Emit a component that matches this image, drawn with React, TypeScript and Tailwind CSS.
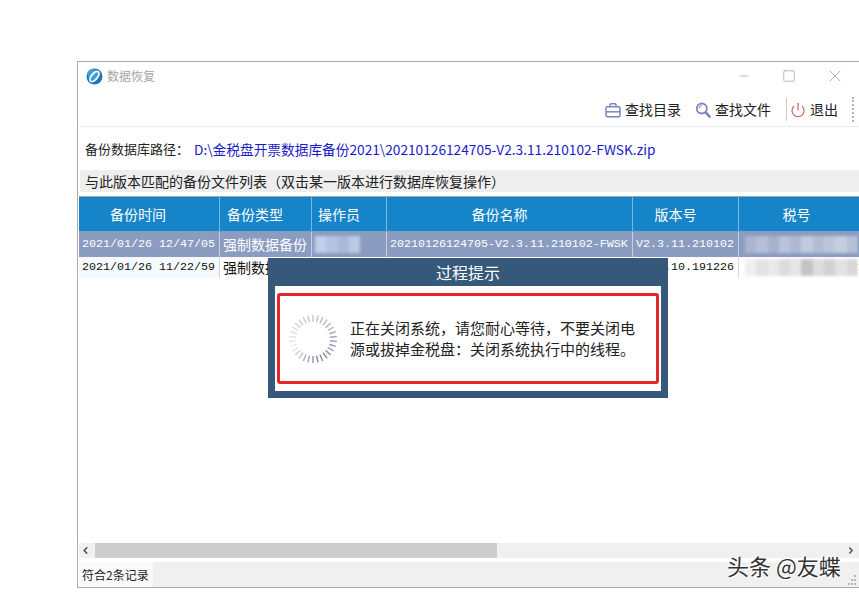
import { Minus, Square, X, ChevronLeft, ChevronRight, Power } from "lucide-react";

const FONT = "font-['Noto_Sans_CJK_SC','Liberation_Sans',sans-serif]";
const MONO = "font-['Liberation_Mono','Noto_Sans_CJK_SC',monospace] text-[11.67px]";

function Logo() {
  return (
    <svg width="17" height="17" viewBox="0 0 17 17">
      <circle cx="8.5" cy="8.5" r="8" fill="#1c78b8" />
      <circle cx="7" cy="6.5" r="5.5" fill="#4fb0de" opacity="0.7" />
      <ellipse cx="8.5" cy="8.5" rx="3" ry="6" transform="rotate(40 8.5 8.5)" fill="none" stroke="#ffffff" strokeWidth="1.8" />
    </svg>
  );
}

function BriefcaseIcon() {
  return (
    <svg width="16" height="16" viewBox="0 0 16 16" fill="none" stroke="#7b84bb" strokeWidth="1.5">
      <rect x="1" y="4.8" width="14" height="10" rx="1.5" />
      <path d="M1 9.8h14" />
      <path d="M5 4.8V2.8a1 1 0 0 1 1-1h4a1 1 0 0 1 1 1v2" />
    </svg>
  );
}

function SearchIcon() {
  return (
    <svg width="16" height="16" viewBox="0 0 16 16" fill="none" stroke="#7b84bb">
      <circle cx="6.8" cy="6.5" r="5" strokeWidth="1.8" />
      <path d="M4 6.5a2.8 2.8 0 0 1 2.8-2.8" strokeWidth="1" />
      <path d="M10.6 10.4L14.6 14.6" strokeWidth="2.6" strokeLinecap="round" />
    </svg>
  );
}

function Spinner() {
  const ticks = Array.from({ length: 30 }, (_, i) => i * 12);
  return (
    <svg width="52" height="52" viewBox="-26 -26 52 52">
      {ticks.map((a) => {
        const rel = (a - 250 + 360) % 360;
        const op = rel < 280 ? 0.12 + (rel / 280) * 0.68 : 0.8 - ((rel - 280) / 80) * 0.68;
        return (
          <line
            key={a}
            x1="0"
            y1="-17"
            x2="0"
            y2="-24"
            stroke="#5c6b85"
            strokeWidth="1.4"
            opacity={op}
            transform={`rotate(${a})`}
          />
        );
      })}
    </svg>
  );
}

function Tool({ icon, label }: { icon: React.ReactNode; label: string }) {
  return (
    <div className="flex items-center gap-[4px]">
      {icon}
      <span className="text-[14px] text-[#222]">{label}</span>
    </div>
  );
}

const cols = "grid grid-cols-[141px_92px_75px_246px_106px_119px_60px]";

function Mosaic({ tones }: { tones: string[] }) {
  return (
    <div className="flex h-[17px] w-full blur-[1.5px]">
      {tones.map((t, i) => (
        <div key={i} className={`flex-1 ${t}`} />
      ))}
    </div>
  );
}

const rowOneTax = [
  "bg-[#aab6cf]", "bg-[#b5c0d8]", "bg-[#a6b2cc]", "bg-[#b9c4da]", "bg-[#aeb9d2]",
  "bg-[#c2cbde]", "bg-[#b2bdd5]", "bg-[#bcc6db]", "bg-[#c6cfe0]", "bg-[#b5c0d6]",
];
const rowTwoTax = [
  "bg-[#efefef]", "bg-[#e3e3e3]", "bg-[#e9e9e9]", "bg-[#dcdcdc]", "bg-[#e6e6e6]",
  "bg-[#c4c4c4]", "bg-[#dddddd]", "bg-[#d2d2d2]", "bg-[#e2e2e2]", "bg-[#d8d8d8]",
];

export default function App() {
  return (
    <div className={`relative w-[859px] h-[595px] overflow-hidden bg-white pt-[61px] pl-[77px] ${FONT}`}>
      <div className="w-[800px] h-[527px] border border-[#ababab] flex flex-col bg-white">
        {/* title bar */}
        <div className="h-[30px] flex items-center pl-[8px] pb-[2px] shrink-0">
          <Logo />
          <span className="ml-[4px] text-[12px] text-[#a5a5a5]">数据恢复</span>
          <div className="ml-[582px] flex items-center text-[#8c8c8c]">
            <Minus size={14} strokeWidth={1} />
            <Square size={14} strokeWidth={1} className="ml-[31px]" />
            <X size={20} strokeWidth={0.8} className="ml-[29px]" />
          </div>
        </div>

        {/* toolbar */}
        <div className="h-[35px] pt-[1px] border-b border-[#ececec] flex items-center pl-[527px] shrink-0">
          <Tool icon={<BriefcaseIcon />} label="查找目录" />
          <div className="ml-[14px]">
            <Tool icon={<SearchIcon />} label="查找文件" />
          </div>
          <div className="ml-[15px] h-[23px] w-px bg-[#e3c4c4]" />
          <div className="ml-[3px]">
            <Tool icon={<Power size={16} color="#cf6060" strokeWidth={1.8} />} label="退出" />
          </div>
          <div className="ml-[14px] h-[25px] w-[2px] border-l-2 border-dotted border-[#b5b5b5]" />
        </div>

        {/* path */}
        <div className="h-[43px] flex items-center pl-[7px] pt-[1px] shrink-0">
          <span className="text-[#222] text-[13px] w-[109px]">备份数据库路径：</span>
          <span className="text-[#1a1ac8] text-[13.7px] whitespace-nowrap">D:\金税盘开票数据库备份2021\20210126124705-V2.3.11.210102-FWSK.zip</span>
        </div>

        {/* section */}
        <div className="h-[22px] ml-[2px] bg-[#eeeeee] flex items-center pl-[5px] text-[14px] text-[#222] shrink-0">
          与此版本匹配的备份文件列表（双击某一版本进行数据库恢复操作）
        </div>

        {/* table */}
        <div className="mt-[4px] ml-px flex-1 min-h-0 overflow-hidden">
          <div className={`${cols} h-[35px] bg-[#1684c8] border-t border-[#9aa9b5] text-white text-[14px]`}>
            <div className="flex items-center pl-[31px] border-r border-[#7fb8dd]">备份时间</div>
            <div className="flex items-center pl-[7px] border-r border-[#7fb8dd]">备份类型</div>
            <div className="flex items-center pl-[6px] border-r border-[#7fb8dd]">操作员</div>
            <div className="flex items-center justify-center pr-[20px] border-r border-[#7fb8dd]">备份名称</div>
            <div className="flex items-center justify-center pr-[20px] border-r border-[#7fb8dd]">版本号</div>
            <div className="flex items-center justify-center pr-[4px]">税号</div>
            <div />
          </div>
          <div className={`${cols} h-[26px] pt-[1px] bg-[#8a9cbf] text-white`}>
            <div className={`flex items-center pl-[3px] border-r border-[#c5cfe0] ${MONO}`}>2021/01/26 12/47/05</div>
            <div className="flex items-center pl-[3px] border-r border-[#c5cfe0] text-[14px]">强制数据备份</div>
            <div className="flex items-center pl-[3px] pr-[26px] border-r border-[#c5cfe0] overflow-hidden">
              <Mosaic tones={["bg-[#c2cfe8]", "bg-[#b4c3e0]", "bg-[#a9b9d8]", "bg-[#bccae4]"]} />
            </div>
            <div className={`flex items-center pl-[3px] border-r border-[#c5cfe0] whitespace-nowrap ${MONO}`}>20210126124705-V2.3.11.210102-FWSK</div>
            <div className={`flex items-center pl-[3px] border-r border-[#c5cfe0] ${MONO}`}>V2.3.11.210102</div>
            <div className="flex items-center pl-[6px] overflow-hidden"><Mosaic tones={rowOneTax} /></div>
            <div />
          </div>
          <div className={`${cols} h-[21px] bg-white text-[#111]`}>
            <div className={`flex items-center pl-[3px] border-r border-[#d8d8d8] bg-[#f5fafe] ${MONO}`}>2021/01/26 11/22/59</div>
            <div className="flex items-center pl-[3px] border-r border-[#d8d8d8] text-[14px]">强制数据备份</div>
            <div className="border-r border-[#d8d8d8]" />
            <div className={`flex items-center pl-[3px] border-r border-[#d8d8d8] whitespace-nowrap ${MONO}`}>20210126112259-V2.3.10.191226-FWSK</div>
            <div className={`flex items-center pl-[3px] border-r border-[#d8d8d8] ${MONO}`}>V2.3.10.191226</div>
            <div className="flex items-center pl-[6px] overflow-hidden"><Mosaic tones={rowTwoTax} /></div>
            <div className={`flex items-center ${MONO}`}>1</div>
          </div>
        </div>

        {/* scrollbar */}
        <div className="h-[15px] ml-px flex bg-[#f0f0f0] shrink-0">
          <div className="w-[16px] pr-[3px] flex items-center justify-center text-[#444]">
            <ChevronLeft size={11} strokeWidth={3} />
          </div>
          <div className="w-[402px] bg-[#cdcdcd]" />
          <div className="ml-[349px] w-[10px] flex items-center justify-center text-[#444]">
            <ChevronRight size={11} strokeWidth={3} />
          </div>
        </div>

        {/* status */}
        <div className="mt-[4px] h-[25px] ml-px bg-[#f0f0f0] flex shrink-0">
          <div className="w-[74px] bg-[#fafafa] flex items-center pl-[3px] text-[12px] text-[#222]">符合2条记录</div>
        </div>
      </div>

      {/* dialog */}
      <div className="absolute left-[268px] top-[258px] w-[400px] h-[140px] bg-[#36587a] flex flex-col px-[7px] pb-[7px]">
        <div className="h-[28px] pb-[1px] flex items-center justify-center text-[16px] text-white shrink-0">过程提示</div>
        <div className="flex-1 bg-white pt-[7px] px-[2px] pb-[7px]">
          <div className="h-full border-[3px] border-[#e5272a] rounded-[3px] flex items-center pl-[7px]">
            <Spinner />
            <p className="ml-[11px] mb-[2px] w-[290px] text-[15px] leading-[21px] text-[#222]">
              正在关闭系统，请您耐心等待，不要关闭电源或拔掉金税盘：关闭系统执行中的线程。
            </p>
          </div>
        </div>
      </div>

      {/* resize grip */}
      <svg className="absolute left-[848px] top-[574px]" width="9" height="11" viewBox="0 0 9 11" fill="#b8b8b8">
        <rect x="6" y="1" width="2" height="2" />
        <rect x="3" y="5" width="2" height="2" />
        <rect x="6" y="5" width="2" height="2" />
        <rect x="0" y="9" width="2" height="2" />
        <rect x="3" y="9" width="2" height="2" />
        <rect x="6" y="9" width="2" height="2" />
      </svg>

      {/* watermark */}
      <div className="absolute left-[727px] top-[549px] text-[22px] text-[#333] whitespace-nowrap [text-shadow:1px_1px_0_#ffffff,-1px_-1px_0_#ffffff]">
        头条 @友蝶
      </div>
    </div>
  );
}
